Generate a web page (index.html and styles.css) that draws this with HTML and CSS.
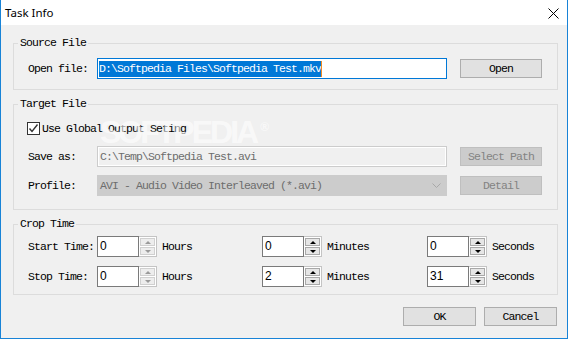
FILE: index.html
```html
<!DOCTYPE html>
<html lang="en">
<head>
  <meta charset="UTF-8" />
  <title>Task Info</title>
  <link rel="stylesheet" href="styles.css">
</head>
<body>

  <div class="window">
    <div class="titlebar">
      <span class="title">Task Info</span>
      <svg class="close" width="11" height="11" viewBox="0 0 11 11">
        <path d="M0.5 0.5L10.5 10.5M10.5 0.5L0.5 10.5" stroke="#000" stroke-width="1" fill="none"/>
      </svg>
    </div>

    <div class="content">
      <section class="group group-source">
        <div class="group-title">Source File</div>
        <div class="row">
          <span class="label">Open file:</span>
          <div class="field field-focus"><span class="selected">D:\Softpedia Files\Softpedia Test.mkv</span><span class="caret"></span></div>
          <button class="btn">Open</button>
        </div>
      </section>

      <section class="group group-target">
        <div class="group-title">Target File</div>
        <div class="check-row">
          <span class="checkbox">
            <svg width="11" height="11" viewBox="0 0 11 11"><path d="M1.5 5.5L4 8.5L9.5 1.5" stroke="#333" stroke-width="1.4" fill="none"/></svg>
          </span>
          <span>Use Global Output Seting</span>
        </div>
        <div class="row save-row">
          <span class="label">Save as:</span>
          <div class="field field-disabled">C:\Temp\Softpedia Test.avi</div>
          <button class="btn btn-disabled">Select Path</button>
        </div>
        <div class="row profile-row">
          <span class="label">Profile:</span>
          <div class="field combo">
            <span>AVI - Audio Video Interleaved (*.avi)</span>
            <svg width="9" height="5" viewBox="0 0 9 5"><path d="M0.5 0.5L4.5 4.5L8.5 0.5" stroke="#a8a8a8" fill="none"/></svg>
          </div>
          <button class="btn btn-disabled">Detail</button>
        </div>
      </section>

      <section class="group group-crop">
        <div class="group-title">Crop Time</div>
        <div class="row start-row">
          <span class="label">Start Time:</span>
          <div class="spin spin-dim">
            <div class="spin-field">0</div>
            <div class="spin-btns"><span class="spin-btn"><i class="arrow-up"></i></span><span class="spin-btn"><i class="arrow-down"></i></span></div>
          </div>
          <span class="unit">Hours</span>
          <div class="spin">
            <div class="spin-field">0</div>
            <div class="spin-btns"><span class="spin-btn"><i class="arrow-up"></i></span><span class="spin-btn"><i class="arrow-down"></i></span></div>
          </div>
          <span class="unit">Minutes</span>
          <div class="spin">
            <div class="spin-field">0</div>
            <div class="spin-btns"><span class="spin-btn"><i class="arrow-up"></i></span><span class="spin-btn"><i class="arrow-down"></i></span></div>
          </div>
          <span class="unit">Seconds</span>
        </div>
        <div class="row stop-row">
          <span class="label">Stop Time:</span>
          <div class="spin spin-dim">
            <div class="spin-field">0</div>
            <div class="spin-btns"><span class="spin-btn"><i class="arrow-up"></i></span><span class="spin-btn"><i class="arrow-down"></i></span></div>
          </div>
          <span class="unit">Hours</span>
          <div class="spin">
            <div class="spin-field">2</div>
            <div class="spin-btns"><span class="spin-btn"><i class="arrow-up"></i></span><span class="spin-btn"><i class="arrow-down"></i></span></div>
          </div>
          <span class="unit">Minutes</span>
          <div class="spin">
            <div class="spin-field">31</div>
            <div class="spin-btns"><span class="spin-btn"><i class="arrow-up"></i></span><span class="spin-btn"><i class="arrow-down"></i></span></div>
          </div>
          <span class="unit">Seconds</span>
        </div>
      </section>

      <div class="actions">
        <button class="btn btn-action">OK</button>
        <button class="btn btn-action">Cancel</button>
      </div>
    </div>

    <div class="watermark">SOFTPEDIA<sup>®</sup></div>
  </div>

</body>
</html>
```

FILE: styles.css
```css
html, body {
  margin: 0;
  background: #fff;
}

body {
  font-family: "Liberation Mono", monospace;
  font-size: 11.5px;
  letter-spacing: -0.9px;
  color: #000;
}

.window {
  position: relative;
  width: 568px;
  height: 339px;
  box-sizing: border-box;
  border: 1px solid #1883d7;
  border-top: none;
  background: #f0f0f0;
  overflow: hidden;
}

.titlebar {
  height: 25px;
  background: #fff;
  display: flex;
  align-items: center;
  justify-content: space-between;
  padding: 0 8px 0 4px;
}

.title {
  font-family: "Segoe UI", "Noto Sans", sans-serif;
  font-size: 11.5px;
  letter-spacing: 0;
}

.close {
  margin-top: 1px;
}

.content {
  padding: 18px 9px 0 12px;
}

.group {
  border: 1px solid #dcdcdc;
  padding: 0 15px 0 14px;
}

.group + .group {
  margin-top: 14px;
}

.group-title {
  width: max-content;
  margin: -8px 0 0 -10px;
  padding: 0 2px;
  line-height: 14px;
  background: #f0f0f0;
}

.row {
  display: flex;
  align-items: center;
  height: 21px;
}

.label {
  width: 69px;
  flex: none;
}

.field {
  width: 350px;
  height: 21px;
  box-sizing: border-box;
  flex: none;
  display: flex;
  align-items: center;
  padding-left: 2px;
}

.field-focus {
  border: 1px solid #0078d7;
  background: #fff;
  padding-left: 1px;
}

.selected {
  line-height: 16px;
  background: #0078d7;
  color: #fff;
}

.caret {
  width: 1px;
  height: 16px;
  background: #f08a24;
}

.field-disabled {
  border: 1px solid #cccccc;
  box-shadow: inset 0 0 0 1px #fff;
  color: #6d6d6d;
}

.combo {
  border: 1px solid #cccccc;
  background: #cccccc;
  color: #6d6d6d;
  justify-content: space-between;
  padding-right: 5px;
}

.btn {
  margin: 0 0 0 13px;
  width: 82px;
  height: 19px;
  padding: 0;
  box-sizing: border-box;
  border: 1px solid #adadad;
  background: #e1e1e1;
  font: inherit;
  letter-spacing: inherit;
  color: #000;
}

.btn-disabled {
  border-color: #bfbfbf;
  background: #cccccc;
  color: #838383;
}

/* Source */
.group-source {
  padding-bottom: 10px;
}

.group-source .row {
  margin-top: 8px;
}

/* Target */
.group-target {
  padding-bottom: 13px;
}

.check-row {
  display: flex;
  align-items: center;
  gap: 2px;
  height: 13px;
  margin: 11px 0 0 -1px;
  line-height: 13px;
}

.checkbox {
  width: 13px;
  height: 13px;
  box-sizing: border-box;
  border: 1px solid #333;
  background: #fff;
  display: flex;
  align-items: center;
  justify-content: center;
}

.save-row {
  margin-top: 11px;
}

.profile-row {
  margin-top: 8px;
}

/* Crop time */
.group-crop {
  padding-bottom: 7px;
}

.start-row {
  margin-top: 5px;
}

.stop-row {
  margin-top: 9px;
}

.spin {
  display: flex;
  width: 60px;
  height: 21px;
  flex: none;
}

.spin-field {
  flex: 1;
  box-sizing: border-box;
  border: 1px solid #7a7a7a;
  background: #fff;
  padding-left: 2px;
  font-family: "Liberation Sans", sans-serif;
  font-size: 12px;
  letter-spacing: 0;
  line-height: 19px;
}

.spin-btns {
  width: 18px;
  box-sizing: border-box;
  border: 1px solid #c4c4c4;
  border-left: none;
  padding: 1px;
  display: flex;
  flex-direction: column;
  gap: 1px;
  background: #fff;
}

.spin-btn {
  flex: 1;
  border: 1px solid #a8a8a8;
  background: #e6e6e6;
  display: flex;
  align-items: center;
  justify-content: center;
}

.arrow-up,
.arrow-down {
  width: 0;
  height: 0;
  border-left: 3px solid transparent;
  border-right: 3px solid transparent;
}

.arrow-up {
  border-bottom: 3px solid #000;
}

.arrow-down {
  border-top: 3px solid #000;
}

.spin-dim .spin-btn {
  border-color: #d0d0d0;
  background: #ededed;
}

.spin-dim .arrow-up {
  border-bottom-color: #9a9a9a;
}

.spin-dim .arrow-down {
  border-top-color: #9a9a9a;
}

.unit {
  width: 100px;
  flex: none;
  padding-left: 5px;
}

.spin + .unit:last-child {
  width: auto;
}

/* Bottom buttons */
.actions {
  display: flex;
  justify-content: flex-end;
  gap: 8px;
  margin-top: 12px;
  padding-right: 1px;
}

.btn-action {
  margin: 0;
  width: 73px;
}

.watermark {
  position: absolute;
  left: 99px;
  top: 114px;
  font-family: "Liberation Sans", sans-serif;
  font-weight: bold;
  font-size: 32px;
  letter-spacing: -3px;
  color: rgba(255, 255, 255, 0.6);
  pointer-events: none;
}

.watermark sup {
  font-size: 12px;
  letter-spacing: 0;
  margin-left: 4px;
}
```
